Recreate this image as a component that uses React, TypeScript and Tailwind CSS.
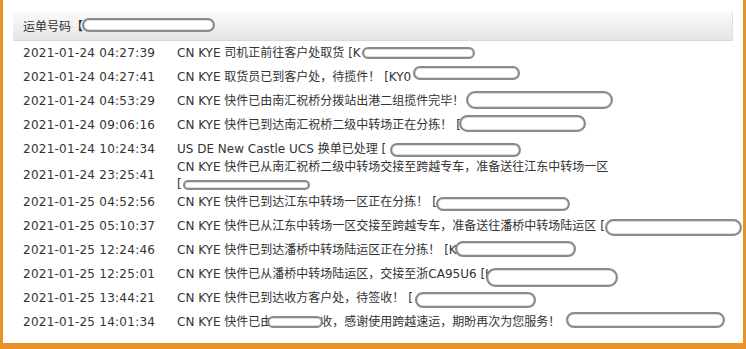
const font = "font-['DejaVu_Sans','Noto_Sans_CJK_SC',sans-serif]";

type Oval = { left: number; top: number; w: number; h: number };

interface Row {
  time: string;
  text: React.ReactNode;
  ovals: Oval[];
  tall?: boolean;
}

const rows: Row[] = [
  { time: "2021-01-24 04:27:39", text: "CN KYE 司机正前往客户处取货 [K", ovals: [{ left: 349, top: 6, w: 113, h: 12 }] },
  { time: "2021-01-24 04:27:41", text: "CN KYE 取货员已到客户处，待揽件！ [KY0", ovals: [{ left: 400, top: 1, w: 107, h: 14 }] },
  { time: "2021-01-24 04:53:29", text: "CN KYE 快件已由南汇祝桥分拨站出港二组揽件完毕！", ovals: [{ left: 453, top: 2, w: 147, h: 18 }] },
  { time: "2021-01-24 09:06:16", text: "CN KYE 快件已到达南汇祝桥二级中转场正在分拣！ [", ovals: [{ left: 446, top: 2, w: 127, h: 17 }] },
  { time: "2021-01-24 10:24:34", text: "US DE New Castle UCS 换单已处理 [", ovals: [{ left: 377, top: 6, w: 131, h: 14 }] },
  {
    time: "2021-01-24 23:25:41",
    text: (
      <>
        CN KYE 快件已从南汇祝桥二级中转场交接至跨越专车，准备送往江东中转场一区
        <br />[
      </>
    ),
    ovals: [{ left: 170, top: 19, w: 127, h: 10 }],
    tall: true,
  },
  { time: "2021-01-25 04:52:56", text: "CN KYE 快件已到达江东中转场一区正在分拣！ [", ovals: [{ left: 423, top: 7, w: 134, h: 14 }] },
  { time: "2021-01-25 05:10:37", text: "CN KYE 快件已从江东中转场一区交接至跨越专车，准备送往潘桥中转场陆运区 [", ovals: [{ left: 592, top: 5, w: 137, h: 17 }] },
  { time: "2021-01-25 12:24:46", text: "CN KYE 快件已到达潘桥中转场陆运区正在分拣！ [K", ovals: [{ left: 442, top: 3, w: 121, h: 16 }] },
  { time: "2021-01-25 12:25:01", text: "CN KYE 快件已从潘桥中转场陆运区，交接至浙CA95U6 [K", ovals: [{ left: 473, top: 6, w: 132, h: 19 }] },
  { time: "2021-01-25 13:44:21", text: "CN KYE 快件已到达收方客户处，待签收！ [", ovals: [{ left: 402, top: 6, w: 121, h: 16 }] },
  {
    time: "2021-01-25 14:01:34",
    text: (
      <>
        CN KYE 快件已由<span className="inline-block w-[48px]" />收，感谢使用跨越速运，期盼再次为您服务！
      </>
    ),
    ovals: [
      { left: 254, top: 6, w: 56, h: 12 },
      { left: 553, top: 2, w: 159, h: 16 },
    ],
  },
];

// hand-drawn redaction blobs over the tracking numbers
function Redaction({ o }: { o: Oval }) {
  return (
    <span
      className="absolute rounded-full bg-white border-2 border-[#8a8a8a] shadow-[inset_0_0_0_0.5px_#bbb]"
      style={{ left: o.left, top: o.top, width: o.w, height: o.h }}
    />
  );
}

export default function App() {
  return (
    <div className={`w-[746px] h-[349px] bg-white border-l-[3px] border-r-[3px] border-b-[6px] border-[#e8912b] pt-[12px] px-[10px] text-[12px] text-[#333] ${font}`}>
      <div className="relative h-[29px] flex items-center pl-[10px] pt-px bg-gradient-to-b from-[#fbfbfb] to-[#e4e4e4] border-b border-[#d8d8d8] border-r border-r-[#e0e0e0]">
        <span>运单号码【</span>
        <Redaction o={{ left: 69, top: 6, w: 133, h: 14 }} />
      </div>
      <div className="flex flex-col">
        {rows.map((r) => (
          <div
            key={r.time}
            className={`relative flex items-center pl-[10px] leading-[17px] ${r.tall ? "h-[29px]" : "h-[24px]"}`}
          >
            <span className="w-[154px] shrink-0 tracking-[0.25px]">{r.time}</span>
            <span className="whitespace-nowrap">{r.text}</span>
            {r.ovals.map((o, i) => (
              <Redaction key={i} o={o} />
            ))}
          </div>
        ))}
      </div>
    </div>
  );
}
